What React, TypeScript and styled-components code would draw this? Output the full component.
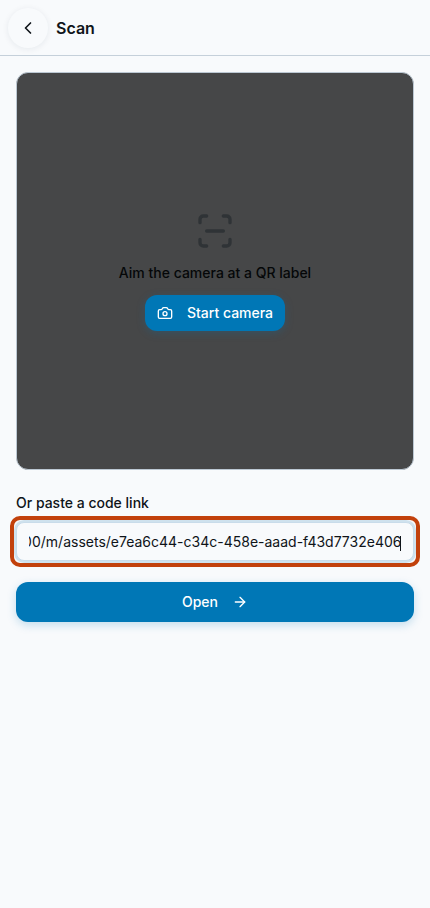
import React, { useLayoutEffect, useRef } from 'react';
import styled, { createGlobalStyle } from 'styled-components';
import { ArrowRight, Camera, ChevronLeft, ScanLine } from 'lucide-react';

const GlobalStyle = createGlobalStyle`
  html, body {
    margin: 0;
    padding: 0;
    background: #f8fafc;
  }
  body {
    font-family: Inter, "Liberation Sans", sans-serif;
    color: #0f1419;
  }
  * { box-sizing: border-box; }
`;

const Page = styled.div`
  min-height: 908px;
  background: #f8fafc;
`;

const Header = styled.header`
  height: 56px;
  display: flex;
  align-items: center;
  gap: 8px;
  padding: 0 8px;
  border-bottom: 1px solid #c5d0da;
`;

const BackButton = styled.button`
  width: 40px;
  height: 40px;
  border: 0;
  border-radius: 50%;
  padding: 0;
  display: flex;
  align-items: center;
  justify-content: center;
  background: #f8fafc;
  color: #0f1419;
  box-shadow: 0 1px 6px rgba(15, 40, 70, 0.08);
`;

const Title = styled.h1`
  margin: 0;
  font-size: 16px;
  line-height: 24px;
  font-weight: 600;
`;

const Main = styled.main`
  padding: 16px;
  display: flex;
  flex-direction: column;
`;

const Viewfinder = styled.section`
  height: 398px;
  border-radius: 12px;
  border: 1px solid #bcc8d3;
  background: #464748;
  display: flex;
  flex-direction: column;
  align-items: center;
  justify-content: center;
  color: #050708;
`;

const ScanIcon = styled(ScanLine)`
  color: #2f3336;
  margin-bottom: 12px;
`;

const Hint = styled.p`
  margin: 0 0 12px;
  font-size: 14px;
  line-height: 20px;
  font-weight: 500;
`;

const CameraButton = styled.button`
  height: 36px;
  display: flex;
  align-items: center;
  gap: 14px;
  padding: 0 12px;
  border: 0;
  border-radius: 12px;
  background: #0077b6;
  color: #fff;
  font: 500 14px/20px Inter, "Liberation Sans", sans-serif;
  box-shadow: 0 2px 8px rgba(0, 119, 182, 0.25);
`;

const FieldLabel = styled.label`
  margin-top: 23px;
  font-size: 14px;
  line-height: 20px;
  font-weight: 500;
`;

const FieldRing = styled.div`
  position: relative;
  margin: 3px -6px 0;
  padding: 2px;
  border: 4px solid #c2410c;
  border-radius: 10px;
`;

const LinkInput = styled.input`
  display: block;
  width: 100%;
  height: 39px;
  padding: 0 12px;
  border: 1px solid #c9dcea;
  border-radius: 8px;
  outline: 0;
  background: #f8fafc;
  color: #0f1419;
  caret-color: transparent;
  font: 400 14px/20px Inter, "Liberation Sans", sans-serif;
  box-shadow: 0 0 0 2px #cfe2ee;
`;

const Caret = styled.span`
  position: absolute;
  top: 16px;
  right: 15px;
  width: 1px;
  height: 15px;
  background: #0f1419;
`;

const OpenButton = styled.button`
  margin-top: 15px;
  height: 40px;
  display: flex;
  align-items: center;
  justify-content: center;
  gap: 14px;
  border: 0;
  border-radius: 12px;
  background: #0077b6;
  color: #fff;
  font: 500 14px/20px Inter, "Liberation Sans", sans-serif;
  box-shadow: 0 3px 10px rgba(0, 119, 182, 0.22);
`;

const codeLink = 'http://localhost:3000/m/assets/e7ea6c44-c34c-458e-aaad-f43d7732e406';

export default function App() {
  const inputRef = useRef<HTMLInputElement>(null);

  useLayoutEffect(() => {
    const input = inputRef.current;
    if (input) {
      input.focus();
      input.setSelectionRange(codeLink.length, codeLink.length);
      input.scrollLeft = input.scrollWidth;
    }
  }, []);

  return (
    <Page>
      <GlobalStyle />
      <Header>
        <BackButton aria-label="Back">
          <ChevronLeft size={20} strokeWidth={2} />
        </BackButton>
        <Title>Scan</Title>
      </Header>
      <Main>
        <Viewfinder>
          <ScanIcon size={40} strokeWidth={2} />
          <Hint>Aim the camera at a QR label</Hint>
          <CameraButton>
            <Camera size={16} strokeWidth={2} />
            Start camera
          </CameraButton>
        </Viewfinder>
        <FieldLabel htmlFor="code-link">Or paste a code link</FieldLabel>
        <FieldRing>
          <LinkInput id="code-link" ref={inputRef} defaultValue={codeLink} />
          <Caret aria-hidden="true" />
        </FieldRing>
        <OpenButton>
          Open
          <ArrowRight size={16} strokeWidth={2} />
        </OpenButton>
      </Main>
    </Page>
  );
}
